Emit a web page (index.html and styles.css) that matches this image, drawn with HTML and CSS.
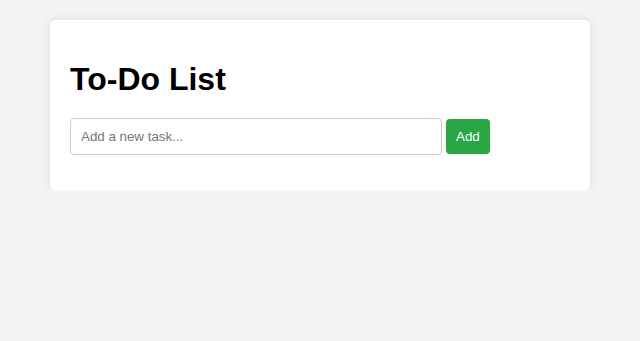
FILE: index.html
```html
<!DOCTYPE html>
<html lang="en">
<head>
<meta charset="utf-8">
<title>To-Do List</title>
<link rel="stylesheet" href="styles.css">
</head>
<body>
<div class="container">
  <h1 class="title">To-Do List</h1>
  <div class="entry">
    <input class="task-input" type="text" placeholder="Add a new task...">
    <button class="add-btn" type="button">Add</button>
  </div>
  <ul class="task-list"></ul>
</div>
</body>
</html>
```

FILE: styles.css
```css
html, body {
  margin: 0;
  padding: 0;
}
body {
  background: #f4f4f4;
  font-family: "Liberation Sans", Arial, sans-serif;
  padding-top: 20px;
}
.container {
  width: 500px;
  margin: 0 auto;
  padding: 20px;
  background: #fff;
  border-radius: 5px;
  box-shadow: 0 0 10px rgba(0, 0, 0, 0.1);
}
.title {
  font-size: 32px;
  font-weight: bold;
  margin: 21.44px 0 20px;
  color: #000;
}
.entry {
  display: flex;
  align-items: center;
  gap: 4px;
}
.task-input {
  width: 350px;
  padding: 10px;
  border: 1px solid #ccc;
  border-radius: 4px;
  font-family: "Liberation Sans", Arial, sans-serif;
  font-size: 13.333px;
  line-height: 15px;
  margin: 0;
  outline: none;
}
.task-input::placeholder {
  color: #757575;
}
.add-btn {
  padding: 10px;
  border: none;
  border-radius: 4px;
  background: #28a745;
  color: #fff;
  font-family: "Liberation Sans", Arial, sans-serif;
  font-size: 13.333px;
  line-height: 15px;
  margin: 0;
  cursor: pointer;
}
.task-list {
  list-style: none;
  padding: 0;
  margin: 16px 0 0;
}
```
